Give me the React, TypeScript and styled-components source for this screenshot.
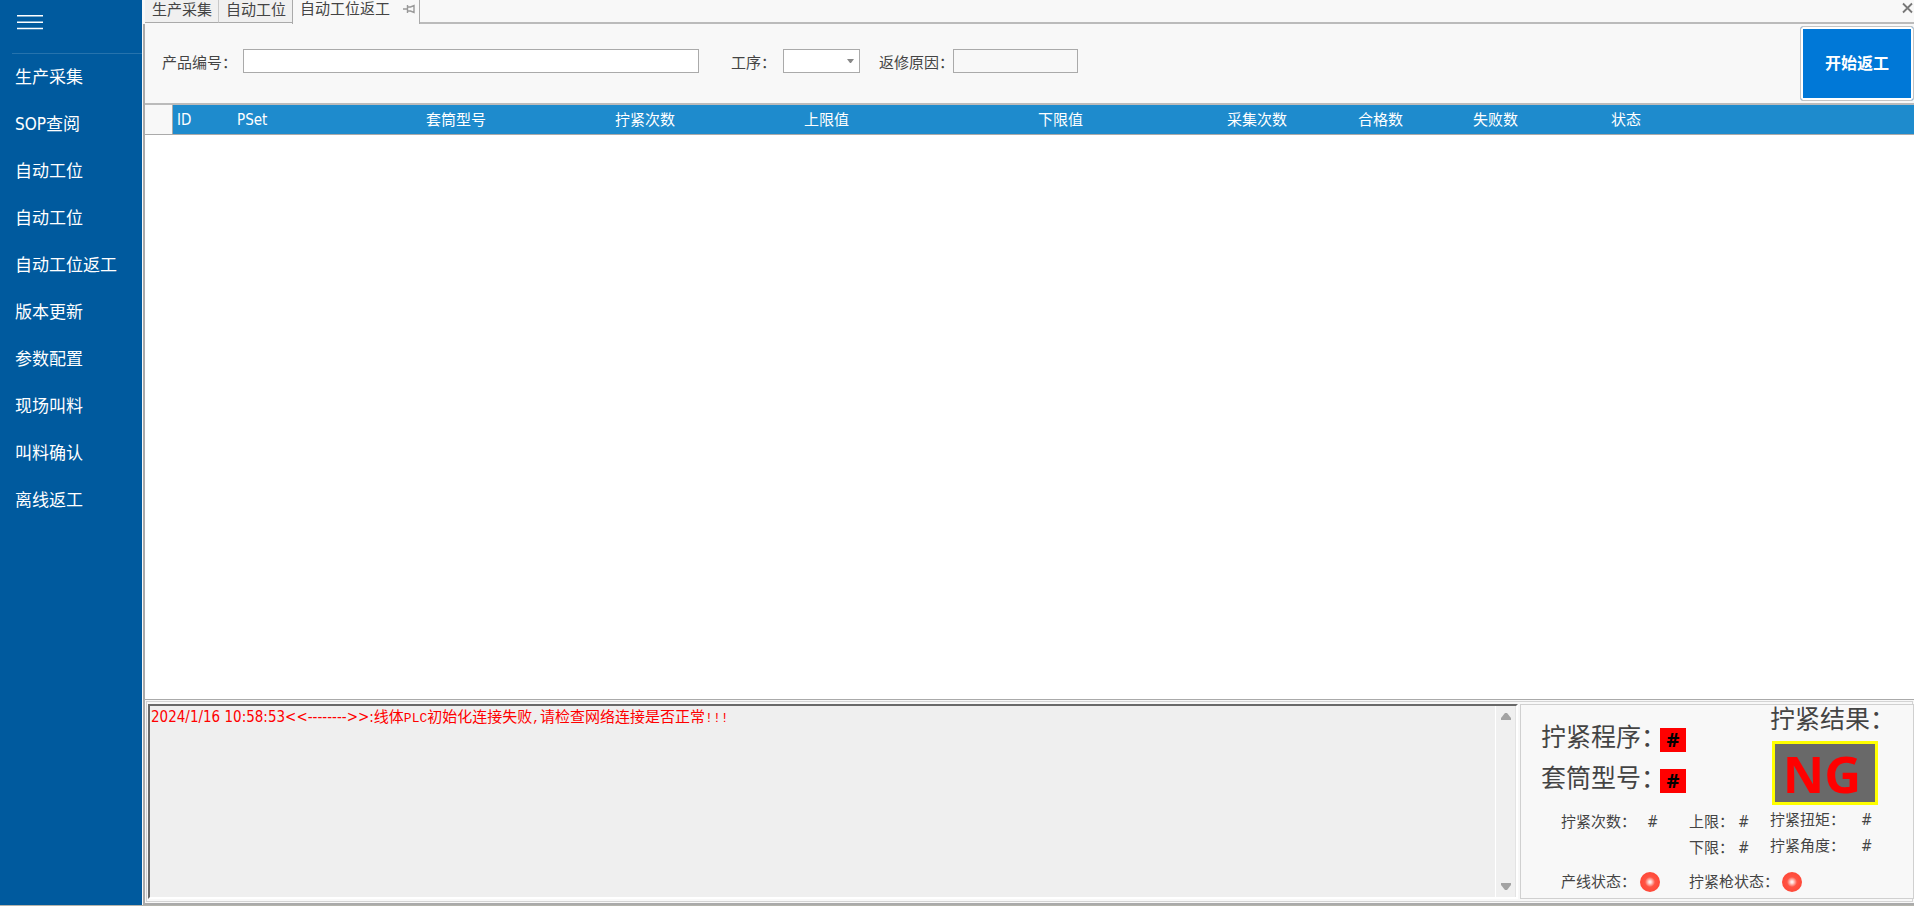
import React from 'react';
import styled, { createGlobalStyle, css } from 'styled-components';

const Global = createGlobalStyle`
  *, *::before, *::after { box-sizing: border-box; }
  body { margin: 0; background: #f8f8f8; }
  body, button, input, select {
    font-family: "DejaVu Sans Condensed", "Noto Sans CJK SC", sans-serif;
    font-size: 15px;
    line-height: 20px;
    color: #444;
  }
`;

const Shell = styled.div`
  display: flex;
  min-height: 100vh;
  border-bottom: 1px solid #b4b4ac;
`;

const Sidebar = styled.nav`
  flex: 0 0 142px;
  background: #005a9e;
`;

const MenuButton = styled.button`
  display: block;
  margin: 0 0 0 12px;
  padding: 10px 0 0 5px;
  width: 130px;
  height: 54px;
  border: 0;
  border-bottom: 1px solid #2673ad;
  background: none;
  text-align: left;
  svg { display: block; margin-bottom: 23px; }
`;

const NavList = styled.ul`
  margin: 0;
  padding: 0;
  list-style: none;
`;

const NavLink = styled.a`
  display: block;
  padding: 0 0 0 15px;
  height: 47px;
  line-height: 47px;
  font-size: 17px;
  color: #fff;
  text-decoration: none;
  white-space: nowrap;
`;

const Main = styled.main`
  flex: 1;
  min-width: 0;
  display: flex;
  flex-direction: column;
  margin-left: 1px;
`;

const TabBar = styled.div`
  display: flex;
  height: 24px;
  padding-left: 2px;
`;

const Tab = styled.button<{ $active?: boolean }>`
  display: flex;
  align-items: center;
  height: 23px;
  padding: 0 6px 2px 7px;
  border: 0;
  border-right: 1px solid #c8c8c8;
  border-bottom: 1px solid #aaa;
  background: #f0f0f0;
  white-space: nowrap;
  ${p => p.$active && css`
    height: 24px;
    gap: 13px;
    margin-left: -1px;
    padding: 0 4px 7px 7px;
    border-left: 1px solid #aaa;
    border-right-color: #aaa;
    border-bottom: 0;
    background: #f8f8f8;
  `}
`;

const TabRest = styled.div`
  flex: 1;
  display: flex;
  justify-content: flex-end;
  height: 24px;
  border-bottom: 2px solid #bbb;
`;

const CloseButton = styled.button`
  width: 12px;
  height: 16px;
  padding: 0;
  border: 0;
  background: none;
  svg { display: block; }
`;

const Page = styled.div`
  flex: 1;
  display: flex;
  flex-direction: column;
  border-left: 2px solid #aaa;
`;

const Toolbar = styled.form`
  display: flex;
  align-items: flex-start;
  height: 81px;
  padding-left: 17px;
  border-bottom: 2px solid #bbb;
`;

const Field = styled.div<{ $label: number; $space: number }>`
  display: grid;
  grid-template-columns: ${p => p.$label}px auto;
  align-items: center;
  margin: 25px ${p => p.$space}px 0 0;
  label { white-space: nowrap; padding-top: 4px; }
`;

const TextBox = styled.input<{ $width: number }>`
  width: ${p => p.$width}px;
  height: 24px;
  padding: 0 4px;
  border: 1px solid #aaa;
  background: #fff;
  &:disabled { background: #f8f8f8; }
`;

const SelectWrap = styled.div`
  display: grid;
  align-items: center;
  width: 77px;
  > * { grid-area: 1 / 1; }
  svg { justify-self: end; margin-right: 6px; pointer-events: none; }
`;

const Select = styled.select`
  appearance: none;
  width: 100%;
  height: 24px;
  border: 1px solid #aaa;
  border-radius: 0;
  background: #fff;
`;

const StartButton = styled.button`
  width: 114px;
  height: 75px;
  margin: 2px 0 0 auto;
  padding: 0;
  border: 1px solid #c4c4c4;
  border-radius: 3px;
  background: #0078d7;
  box-shadow: inset 0 0 0 2px #fff;
  font-size: 16px;
  font-weight: 700;
  color: #fff;
`;

const GridArea = styled.section`
  flex: 1;
  min-height: 200px;
  background: #fff;
  border-bottom: 1px solid #aaa;
`;

const Table = styled.table`
  width: 100%;
  table-layout: fixed;
  border-collapse: separate;
  border-spacing: 0;
`;

const Th = styled.th`
  height: 30px;
  padding: 1px 0 0 4px;
  border-bottom: 1px solid #aaa;
  background: #1e8bcd;
  font-weight: 400;
  text-align: left;
  color: #fff;
  white-space: nowrap;
`;

const RowMark = styled.td`
  padding: 0;
  border-right: 1px solid #aaa;
  border-bottom: 1px solid #aaa;
  background: #f8f8f8;
`;

const Bottom = styled.section`
  display: flex;
  gap: 2px;
  height: 205px;
  padding: 4px 0 4px 3px;
  border-bottom: 2px solid #aaa;
  box-shadow: inset 0 0 0 1px #f8f8f8, inset 0 0 0 2px #d4d4d4;
`;

const LogBox = styled.div`
  flex: 1;
  display: flex;
  min-width: 0;
  border: 2px solid #696969;
  border-right-color: #fff;
  border-bottom-color: #fff;
  background: #efefef;
`;

const LogText = styled.p`
  flex: 1;
  margin: 0;
  padding: 1px;
  color: #f00;
  white-space: nowrap;
`;

const Half = styled.span`
  font-family: "Liberation Mono", monospace;
  font-size: 13px;
`;

const ScrollTrack = styled.div`
  display: flex;
  flex-direction: column;
  justify-content: space-between;
  align-items: center;
  width: 21px;
  padding: 7px 0;
  border-left: 1px solid #fff;
  border-right: 1px solid #e3e3e3;
  background: #f0f0f0;
`;

const Status = styled.section`
  flex: 0 0 394px;
  display: grid;
  grid-template-columns: 229px 1fr;
  padding-left: 20px;
  border: 1px solid #d0d0d0;
  background: #f8f8f8;
`;

const Programme = styled.div`
  padding-top: 12px;
`;

const BigRow = styled.div`
  display: flex;
  align-items: center;
  height: 41px;
  font-size: 25px;
  line-height: 28px;
  white-space: nowrap;
`;

const BigLabel = styled.span`
  width: 119px;
`;

const ResultTitle = styled.h2`
  margin: 0;
  padding-top: 1px;
  height: 32px;
  font-size: 25px;
  font-weight: 400;
  line-height: 28px;
  white-space: nowrap;
`;

const RedTag = styled.output`
  width: 26px;
  height: 24px;
  margin-top: 4px;
  background: #f00;
  font-family: "Noto Sans", sans-serif;
  font-size: 20px;
  font-weight: 700;
  line-height: 24px;
  text-align: center;
  color: #000;
`;

const Verdict = styled.output`
  display: block;
  width: 106px;
  height: 64px;
  margin: 4px 0 2px 2px;
  padding-right: 6px;
  border: 3px solid #ff0;
  background: #696969;
  font-family: "Noto Sans", sans-serif;
  font-size: 51px;
  font-weight: 700;
  line-height: 58px;
  text-align: center;
  color: #f00;
`;

const Details = styled.div`
  display: grid;
  grid-template-columns: 128px 80px;
  grid-template-rows: 26px 26px 42px;
  align-items: center;
  padding: 10px 0 0 20px;
`;

const Reading = styled.div<{ $label: number; $second?: boolean }>`
  display: grid;
  grid-template-columns: ${p => p.$label}px 20px;
  align-items: center;
  height: 26px;
  white-space: nowrap;
  ${p => p.$second && css`grid-column: 2;`}
`;

const navItems = ['生产采集', 'SOP查阅', '自动工位', '自动工位', '自动工位返工', '版本更新', '参数配置', '现场叫料', '叫料确认', '离线返工'];

const columns: [string, number][] = [
  ['ID', 60], ['PSet', 189], ['套筒型号', 189], ['拧紧次数', 189], ['上限值', 234],
  ['下限值', 189], ['采集次数', 131], ['合格数', 115], ['失败数', 138],
];

const Lamp = ({ id }: { id: string }) => (
  <svg width="20" height="20" viewBox="0 0 20 20" role="img" aria-label="离线">
    <defs>
      <radialGradient id={id}>
        <stop offset="0" stopColor="#fff" />
        <stop offset="0.15" stopColor="#ffd8d4" />
        <stop offset="0.5" stopColor="#ff5444" />
        <stop offset="1" stopColor="#ff4838" />
      </radialGradient>
    </defs>
    <circle cx="10" cy="10" r="10" fill={`url(#${id})`} />
  </svg>
);

export default function App() {
  return (
    <>
      <Global />
      <Shell>
        <Sidebar>
          <MenuButton aria-label="菜单">
            <svg width="26" height="20" viewBox="0 0 26 20" stroke="#fff" strokeWidth="1.5">
              <path d="M0 5.7H26M0 12.3H26M0 18.5H26" />
            </svg>
          </MenuButton>
          <NavList>
            {navItems.map((name, i) => <li key={i}><NavLink href="#">{name}</NavLink></li>)}
          </NavList>
        </Sidebar>
        <Main>
          <TabBar>
            <Tab>生产采集</Tab>
            <Tab>自动工位</Tab>
            <Tab $active>
              自动工位返工
              <svg width="12" height="10" viewBox="0 0 12 10" fill="none" stroke="#999" strokeWidth="1.4">
                <path d="M0 5H4M4.5 1V9M5 3H7.5L11 1.5V8.5L7.5 7H5" />
              </svg>
            </Tab>
            <TabRest>
              <CloseButton aria-label="关闭">
                <svg width="11" height="12" viewBox="0 0 11 12" stroke="#777" strokeWidth="1.8">
                  <path d="M1 1.5L10 10.5M10 1.5L1 10.5" />
                </svg>
              </CloseButton>
            </TabRest>
          </TabBar>
          <Page>
            <Toolbar onSubmit={e => e.preventDefault()}>
              <Field $label={81} $space={32}>
                <label htmlFor="code">产品编号：</label>
                <TextBox id="code" $width={456} />
              </Field>
              <Field $label={52} $space={19}>
                <label htmlFor="process">工序：</label>
                <SelectWrap>
                  <Select id="process" />
                  <svg width="7" height="4" viewBox="0 0 7 4"><path d="M0 0H7L4 4H3Z" fill="#888" /></svg>
                </SelectWrap>
              </Field>
              <Field $label={74} $space={0}>
                <label htmlFor="reason">返修原因：</label>
                <TextBox id="reason" $width={125} disabled />
              </Field>
              <StartButton type="submit">开始返工</StartButton>
            </Toolbar>
            <GridArea>
              <Table>
                <colgroup>
                  <col style={{ width: 28 }} />
                  {columns.map(([name, width]) => <col key={name} style={{ width }} />)}
                  <col />
                </colgroup>
                <thead>
                  <tr>
                    <RowMark />
                    {columns.map(([name]) => <Th key={name} scope="col">{name}</Th>)}
                    <Th scope="col">状态</Th>
                  </tr>
                </thead>
              </Table>
            </GridArea>
            <Bottom>
              <LogBox>
                <LogText>
                  2024/1/16 10:58:53&lt;&lt;--------&gt;&gt;:线体<Half>PLC</Half>初始化连接失败<Half>,</Half>请检查网络连接是否正常<Half>!!!</Half>
                </LogText>
                <ScrollTrack>
                  <svg width="10" height="8" viewBox="0 0 10 8"><path d="M4 0H6L10 5V7H0V5Z" fill="#a3a3a3" /></svg>
                  <svg width="10" height="8" viewBox="0 0 10 8"><path d="M4 8H6L10 3V1H0V3Z" fill="#a3a3a3" /></svg>
                </ScrollTrack>
              </LogBox>
              <Status>
                <Programme>
                  <BigRow><BigLabel>拧紧程序：</BigLabel><RedTag>#</RedTag></BigRow>
                  <BigRow><BigLabel>套筒型号：</BigLabel><RedTag>#</RedTag></BigRow>
                  <Details>
                    <Reading $label={86}><span>拧紧次数：</span><output>#</output></Reading>
                    <Reading $label={49}><span>上限：</span><output>#</output></Reading>
                    <Reading $label={49} $second><span>下限：</span><output>#</output></Reading>
                    <Reading $label={79}><span>产线状态：</span><Lamp id="line" /></Reading>
                    <Reading $label={93}><span>拧紧枪状态：</span><Lamp id="gun" /></Reading>
                  </Details>
                </Programme>
                <div>
                  <ResultTitle>拧紧结果：</ResultTitle>
                  <Verdict>NG</Verdict>
                  <Reading $label={91}><span>拧紧扭矩：</span><output>#</output></Reading>
                  <Reading $label={91}><span>拧紧角度：</span><output>#</output></Reading>
                </div>
              </Status>
            </Bottom>
          </Page>
        </Main>
      </Shell>
    </>
  );
}
